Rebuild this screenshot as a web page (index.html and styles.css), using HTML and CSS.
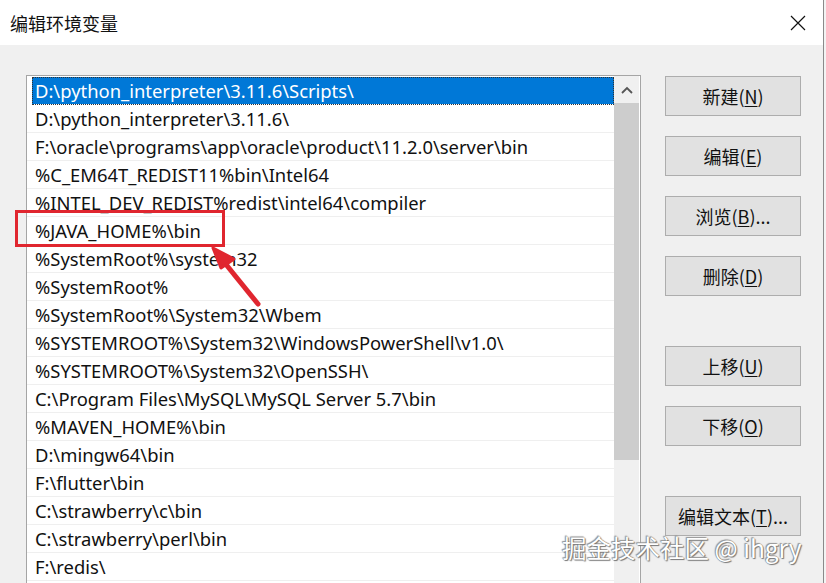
FILE: index.html
```html
<!DOCTYPE html>
<html lang="zh">
<head>
<meta charset="utf-8">
<link rel="stylesheet" href="styles.css">
</head>
<body>
<div class="dialog">
  <div class="titlebar">
    <span class="title">编辑环境变量</span>
    <svg class="close" width="16" height="16" viewBox="0 0 16 16"><path d="M1 1 L15 15 M15 1 L1 15" stroke="#111" stroke-width="1.2" fill="none"/></svg>
  </div>
  <div class="body">
    <div class="listbox">
      <div class="rows">
        <div class="row selected">D:\python_interpreter\3.11.6\Scripts\</div>
        <div class="row">D:\python_interpreter\3.11.6\</div>
        <div class="row">F:\oracle\programs\app\oracle\product\11.2.0\server\bin</div>
        <div class="row">%C_EM64T_REDIST11%bin\Intel64</div>
        <div class="row">%INTEL_DEV_REDIST%redist\intel64\compiler</div>
        <div class="row">%JAVA_HOME%\bin</div>
        <div class="row">%SystemRoot%\system32</div>
        <div class="row">%SystemRoot%</div>
        <div class="row">%SystemRoot%\System32\Wbem</div>
        <div class="row">%SYSTEMROOT%\System32\WindowsPowerShell\v1.0\</div>
        <div class="row">%SYSTEMROOT%\System32\OpenSSH\</div>
        <div class="row">C:\Program Files\MySQL\MySQL Server 5.7\bin</div>
        <div class="row">%MAVEN_HOME%\bin</div>
        <div class="row">D:\mingw64\bin</div>
        <div class="row">F:\flutter\bin</div>
        <div class="row">C:\strawberry\c\bin</div>
        <div class="row">C:\strawberry\perl\bin</div>
        <div class="row">F:\redis\</div>
      </div>
      <div class="scrollbar">
        <div class="sb-up"><svg width="12" height="8" viewBox="0 0 12 8"><path d="M1 7 L6 2 L11 7" stroke="#555" stroke-width="1.8" fill="none"/></svg></div>
        <div class="sb-thumb"></div>
        <div class="sb-track"></div>
      </div>
    </div>
    <div class="buttons">
      <div class="btn">新建(<u>N</u>)</div>
      <div class="btn">编辑(<u>E</u>)</div>
      <div class="btn">浏览(<u>B</u>)...</div>
      <div class="btn">删除(<u>D</u>)</div>
      <div class="btn gap-top">上移(<u>U</u>)</div>
      <div class="btn">下移(<u>O</u>)</div>
      <div class="btn gap-top">编辑文本(<u>T</u>)...</div>
    </div>
  </div>
</div>
<div class="highlight"></div>
<svg class="arrow" width="826" height="583" viewBox="0 0 826 583">
  <line x1="258" y1="304" x2="224" y2="262" stroke="#e0262f" stroke-width="5" stroke-linecap="round"/>
  <path d="M213 248 L234 259 L221 268 Z" fill="#e0262f" stroke="#e0262f" stroke-width="3" stroke-linejoin="round"/>
</svg>
<div class="watermark">掘金技术社区 @ ihgry</div>
</body>
</html>
```

FILE: styles.css
```css
html, body {
  margin: 0;
  padding: 0;
}
body {
  width: 826px;
  height: 583px;
  overflow: hidden;
  background: #f3f3f3;
  position: relative;
  font-family: "Noto Sans", "Noto Sans CJK SC", sans-serif;
  color: #000;
}
.dialog {
  width: 823px;
  height: 583px;
  overflow: hidden;
  border-right: 1px solid #8a8a8a;
  background: #f0f0f0;
  display: flex;
  flex-direction: column;
}
.titlebar {
  height: 45px;
  flex-shrink: 0;
  background: #fff;
  display: flex;
  align-items: center;
  justify-content: space-between;
  padding: 0 17px 0 10px;
  box-sizing: border-box;
}
.title {
  font-family: "Noto Sans CJK SC", sans-serif;
  font-size: 18px;
  color: #111;
}
.body {
  display: flex;
  padding: 30px 0 0 26px;
  gap: 24px;
  flex-shrink: 0;
}
.listbox {
  width: 615px;
  height: 540px;
  border: 1px solid #a5a5a5;
  border-bottom: none;
  background: #fff;
  display: flex;
  box-sizing: border-box;
}
.rows {
  width: 587px;
  padding-top: 1px;
}
.row {
  height: 27px;
  border-bottom: 1px solid #efefef;
  line-height: 27px;
  padding-left: 8px;
  font-size: 18.4px;
  white-space: nowrap;
  overflow: hidden;
  color: #111;
}
.row.selected {
  background: #0078d7;
  color: #fff;
  margin-left: 5px;
  padding-left: 3px;
  outline: 1px dotted #333;
  outline-offset: -1px;
  border-bottom-color: #fff;
}
.scrollbar {
  width: 25px;
  display: flex;
  flex-direction: column;
  background: #f0f0f0;
}
.sb-up {
  height: 27px;
  display: flex;
  align-items: center;
  justify-content: center;
  background: #f0f0f0;
}
.sb-thumb {
  height: 357px;
  background: #cdcdcd;
}
.sb-track {
  flex: 1;
}
.buttons {
  display: flex;
  flex-direction: column;
  gap: 20px;
  padding-top: 1px;
}
.btn {
  width: 136px;
  height: 40px;
  box-sizing: border-box;
  border: 1px solid #adadad;
  background: #e1e1e1;
  display: flex;
  align-items: center;
  justify-content: center;
  font-family: "Noto Sans CJK SC", sans-serif;
  font-size: 18px;
  color: #111;
}
.btn u {
  text-underline-offset: 2px;
}
.gap-top {
  margin-top: 30px;
}
.highlight {
  position: absolute;
  left: 15px;
  top: 210px;
  width: 210px;
  height: 37px;
  border: 3.5px solid #e0262f;
  box-sizing: border-box;
}
.arrow {
  position: absolute;
  left: 0;
  top: 0;
}
.watermark {
  position: absolute;
  left: 562px;
  top: 530px;
  font-family: "Noto Sans CJK SC", sans-serif;
  font-size: 24.5px;
  color: #fff;
  text-shadow: 0 0 1px #666, 1px 1px 1px #777, -1px -1px 1px #999;
  white-space: nowrap;
}
```
